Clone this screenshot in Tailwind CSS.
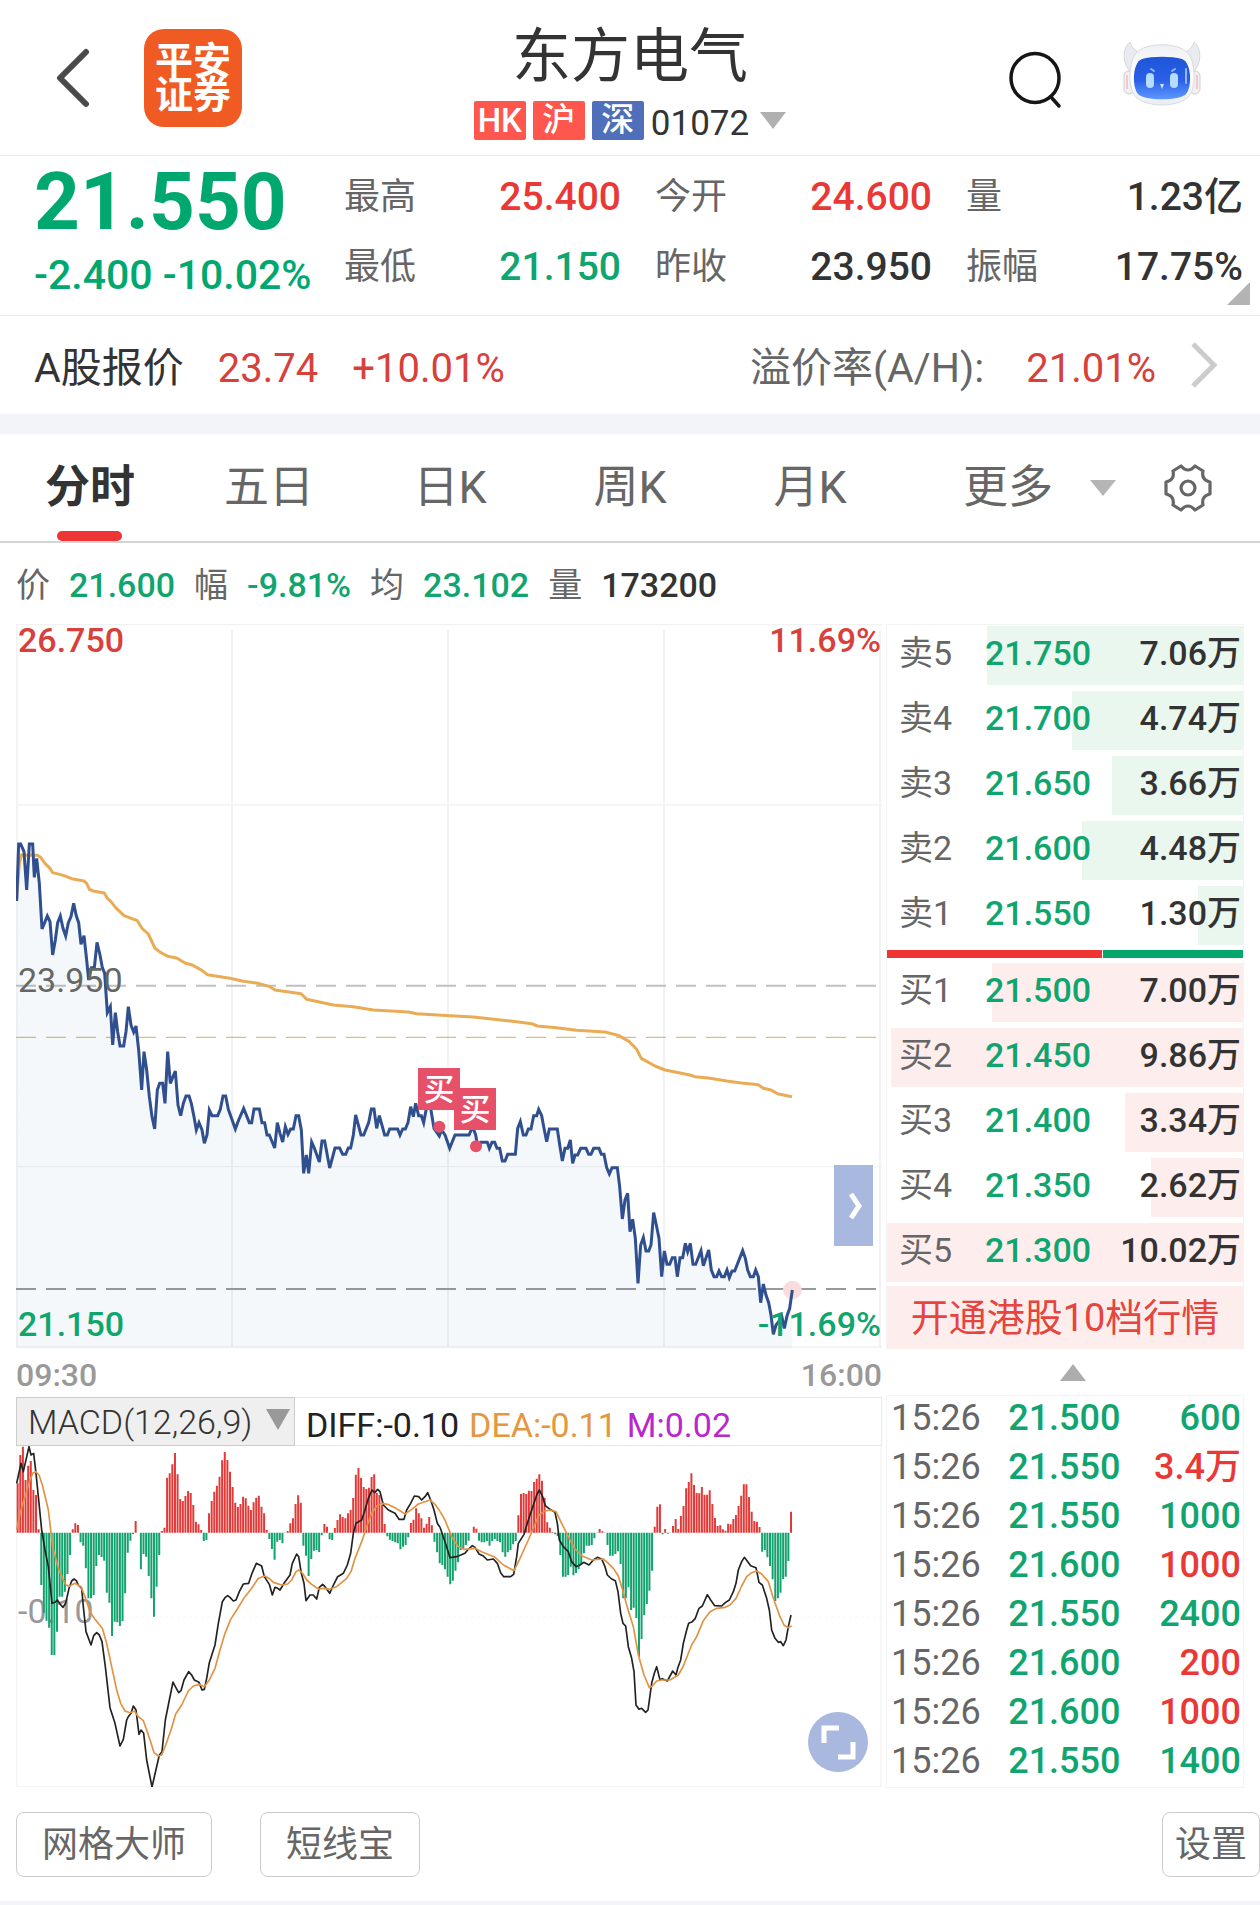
<!DOCTYPE html>
<html lang="zh-CN">
<head>
<meta charset="utf-8">
<meta name="viewport" content="width=device-width, initial-scale=1">
<title>东方电气 01072</title>
<script src="https://cdn.jsdelivr.net/npm/@tailwindcss/browser@4"></script>
</head>
<body class="bg-white text-[#333] font-['Roboto','Noto_Sans_CJK_SC',sans-serif]">

<header class="grid grid-cols-[1fr_auto_1fr] items-center h-[156px] border-b border-[#ececec]">
  <div class="flex items-center pl-[54px] gap-[52px]">
    <button aria-label="返回"><svg class="block w-[38px] h-[60px]" viewBox="0 0 38 60" fill="none" stroke="#4a4a4a" stroke-width="6" stroke-linecap="round" stroke-linejoin="round"><path d="M32 4 6 30l26 26"/></svg></button>
    <div class="w-[98px] h-[98px] rounded-[20px] bg-[#f05a23] text-white font-bold text-[38px] leading-[34px] text-center pt-[15px]">平安<br>证券</div>
  </div>
  <div class="flex flex-col items-center">
    <h1 class="text-[59px] leading-[72px] h-[86px] pt-1.5">东方电气</h1>
    <div class="flex items-center gap-[7px] h-[40px]">
      <span class="w-[52px] h-[39px] rounded-[2px] bg-[#ff564d] text-white text-[33px] leading-[40px] text-center font-medium">HK</span>
      <span class="w-[52px] h-[39px] rounded-[2px] bg-[#ff564d] text-white text-[33px] leading-[37px] text-center font-medium">沪</span>
      <span class="w-[52px] h-[39px] rounded-[2px] bg-[#4f6fba] text-white text-[33px] leading-[37px] text-center font-medium">深</span>
      <span class="text-[35px] leading-[40px] pt-1.5">01072</span>
      <svg class="w-[26px] h-[17px] ml-1" viewBox="0 0 26 17"><path d="M0 0h26L13 17z" fill="#b0b0b0"/></svg>
    </div>
  </div>
  <div class="flex items-center justify-end pr-[58px] gap-[60px]">
    <button aria-label="搜索" class="pt-1"><svg class="block w-[54px] h-[58px]" viewBox="0 0 54 58" fill="none" stroke="#161616" stroke-width="3.5" stroke-linecap="round"><ellipse cx="27" cy="27" rx="24" ry="24.5"/><path d="m43 46 8 9"/></svg></button>
    <button aria-label="智能助手"><svg class="block w-[80px] h-[66px] -mt-2" viewBox="0 0 80 66">
      <defs>
        <linearGradient id="face" x1="0" y1="0" x2="0" y2="1"><stop offset="0" stop-color="#1f55d8"/><stop offset=".55" stop-color="#2a5fe6"/><stop offset="1" stop-color="#5d98ff"/></linearGradient>
        <linearGradient id="shell" x1="0" y1="0" x2="0" y2="1"><stop offset="0" stop-color="#eef0f3"/><stop offset=".5" stop-color="#fff"/><stop offset="1" stop-color="#e9edf3"/></linearGradient>
      </defs>
      <path d="M8 1C3 5 0 14 4 24c2 5 5 7 8 8L18 12C12 9 9 5 8 1zM72 1c5 4 8 13 4 23-2 5-5 7-8 8l-6-20c6-3 9-7 10-11z" fill="#e9ebef" stroke="#d3d7dd"/>
      <rect x="2" y="30" width="10" height="23" rx="5" fill="#f3f0f1" stroke="#d9c9cb"/><rect x="68" y="30" width="10" height="23" rx="5" fill="#f3f0f1" stroke="#d9c9cb"/>
      <path d="M5 34v14M75 34v14" stroke="#dfa9a5"/>
      <path d="M14 12C24 1 56 1 66 12c7 8 8 31 3 40-7 16-51 16-58 0C6 43 7 20 14 12z" fill="url(#shell)" stroke="#d8dce2"/>
      <path d="M20 18c10-3 30-3 40 0 10 4 10 28 4 35-6 7-42 7-48 0-6-7-6-31 4-35z" fill="url(#face)"/>
      <rect x="24" y="32" width="8" height="15" rx="4" fill="#b5dcff"/><rect x="48" y="32" width="8" height="15" rx="4" fill="#b5dcff"/>
      <path d="m29 28 3 2M53 28l-3 2M64 28v14" stroke="#8fb8ff" stroke-width="2" stroke-linecap="round"/>
      <path d="M38 43h4l-2 5z" fill="#c4e4ff"/>
    </svg></button>
  </div>
</header>

<section class="relative flex h-[160px] border-b border-[#ececec] pl-[34px] pr-[17px]">
  <div class="w-[310px] shrink-0 text-[#00a870] whitespace-nowrap">
    <p class="text-[80px] font-bold leading-[92px]">21.550</p>
    <p class="text-[41px] leading-[54px] font-medium">-2.400 -10.02%</p>
  </div>
  <dl class="flex-1 grid grid-cols-3 gap-x-[34px] content-start pt-1.5 leading-[70px]">
    <div class="flex justify-between"><dt class="text-[36px] text-[#666]">最高</dt><dd class="text-[39px] font-medium text-[#e93835]">25.400</dd></div>
    <div class="flex justify-between"><dt class="text-[36px] text-[#666]">今开</dt><dd class="text-[39px] font-medium text-[#e93835]">24.600</dd></div>
    <div class="flex justify-between"><dt class="text-[36px] text-[#666]">量</dt><dd class="text-[39px] font-medium">1.23亿</dd></div>
    <div class="flex justify-between"><dt class="text-[36px] text-[#666]">最低</dt><dd class="text-[39px] font-medium text-[#10a56f]">21.150</dd></div>
    <div class="flex justify-between"><dt class="text-[36px] text-[#666]">昨收</dt><dd class="text-[39px] font-medium">23.950</dd></div>
    <div class="flex justify-between"><dt class="text-[36px] text-[#666]">振幅</dt><dd class="text-[39px] font-medium">17.75%</dd></div>
  </dl>
  <svg class="absolute right-[10px] bottom-[10px] w-[23px] h-[23px]" viewBox="0 0 23 23"><path d="M23 0v23H0z" fill="#b3b3b3"/></svg>
</section>

<a href="#a-share" class="flex items-center h-[98px] pl-[34px] pr-[42px] pt-2 text-[40px] whitespace-nowrap">
  <span class="text-[41px]">A股报价</span>
  <span class="ml-[34px] text-[#d8403c]">23.74</span>
  <span class="ml-[34px] text-[#d8403c]">+10.01%</span>
  <span class="ml-auto text-[41px] text-[#666]">溢价率(A/H):</span>
  <span class="ml-[42px] text-[#d8403c]">21.01%</span>
  <svg class="ml-[34px] w-[28px] h-[46px] -mt-2" viewBox="0 0 28 46" fill="none" stroke="#ccc" stroke-width="5"><path d="m3 2 21 21L3 44"/></svg>
</a>
<div class="h-5 bg-[#f3f4f9]"></div>

<nav class="flex items-stretch h-[109px] border-b-2 border-[#d5d5d5] text-[45px] leading-[106px] text-[#666] whitespace-nowrap">
  <button class="relative w-[180px] font-bold text-[#333]">分时<span class="absolute bottom-0 left-[57px] w-[65px] h-[10px] rounded-full bg-[#ee3535]"></span></button>
  <button class="w-[178px]">五日</button>
  <button class="w-[184px]">日K</button>
  <button class="w-[176px]">周K</button>
  <button class="w-[184px]">月K</button>
  <button class="flex items-center ml-auto gap-[37px]">更多<svg class="w-[26px] h-[16px]" viewBox="0 0 26 16"><path d="M0 0h26L13 16z" fill="#b5b5b5"/></svg></button>
  <button aria-label="图表设置" class="ml-[47px] mr-[47px]"><svg class="block w-[50px] h-[50px]" viewBox="-25 -25 50 50" fill="none" stroke="#666" stroke-width="3.200" stroke-linejoin="round"><path d="M-7-22Q0-14 7-22L15-17Q13-8 22-6V6Q13 8 15 17L7 22Q0 14-7 22L-15 17Q-13 8-22 6V-6Q-13-8-15-17Z"/><circle r="7"/></svg></button>
</nav>

<div class="flex items-center gap-[19px] h-[81px] pl-4 pt-1 text-[34px] font-medium text-[#10a56f] whitespace-nowrap">
  <span class="font-normal text-[#666]">价</span><span>21.600</span>
  <span class="font-normal text-[#666]">幅</span><span>-9.81%</span>
  <span class="font-normal text-[#666]">均</span><span>23.102</span>
  <span class="font-normal text-[#666]">量</span><span class="text-[#333]">173200</span>
</div>

<main class="grid grid-cols-[minmax(0,866fr)_minmax(0,358fr)] gap-1 px-4">
  <div>
    <div class="relative text-[34px] leading-[40px] font-medium">
      <svg class="block w-full h-auto" viewBox="0 0 2598 2172" fill="none">
        <g stroke="#f1f2f4" stroke-width="6">
          <path d="M0 2H2598M0 543H2598M0 1628H2598M0 2169H2598" stroke-width="4"/>
          <path d="M2 0V2172M648 18V2172M1296 18V2172M1944 18V2172M2592 18V2172"/>
        </g>
        <g stroke-dasharray="60 30" stroke-width="6">
          <path d="M0 1085H2580" stroke="#c0c0c0"/>
          <path d="M0 1240H2580" stroke="#e0bd74" stroke-width="4"/>
          <path d="M0 1995H2580" stroke="#999"/>
        </g>
        <circle cx="2329" cy="1998" r="28" fill="#fbdcdc"/>
        <g transform="translate(-48 588)" stroke-width="9" stroke-linejoin="round">
          <polygon id="area" fill="#3f6f9f" fill-opacity=".05"/>
          <polyline stroke="#e9ac55" points="50,235 58,130 64,105 112,106 122,112 135,130 150,145 158,158 190,166 215,176 252,183 260,190 268,208 280,213 313,219 322,235 333,245 347,263 372,287 412,302 426,325 445,342 465,385 480,396 503,409 530,414 555,429 577,435 607,452 622,464 690,475 730,484 775,490 810,500 825,510 903,521 920,538 1000,555 1060,560 1120,570 1225,576 1250,581 1350,587 1420,591 1495,599 1550,605 1595,611 1612,618 1670,623 1730,631 1815,636 1855,646 1888,665 1910,688 1924,715 1965,738 1995,750 2070,765 2085,770 2125,774 2180,783 2225,789 2275,794 2290,805 2313,810 2332,821 2376,830"/>
          <polyline id="price" stroke="#2f4f8f" stroke-linejoin="miter" points="50,243 56,72 62,72 72,95 80,210 88,72 98,72 103,172 110,115 118,190 126,327 134,308 142,288 150,305 158,405 166,360 173,308 181,288 189,325 197,348 205,308 213,290 221,250 229,288 236,308 243,373 252,347 260,420 266,480 274,443 283,443 291,367 300,405 307,443 314,460 322,578 331,560 338,675 346,578 353,635 360,678 371,678 378,635 385,560 393,615 401,636 408,618 416,690 425,810 432,695 440,750 448,830 456,890 464,927 472,810 479,790 488,790 495,850 503,695 511,790 519,770 526,753 534,855 542,887 550,850 558,828 567,828 574,850 582,890 589,930 597,908 606,930 613,970 621,945 628,870 636,887 653,887 661,868 669,828 677,828 685,868 693,890 706,927 716,900 731,865 748,908 755,908 762,867 778,867 786,908 794,908 801,945 808,945 824,984 832,908 840,940 848,966 856,920 864,943 872,927 880,927 888,887 896,887 904,930 911,1060 919,1005 926,1060 935,966 943,984 958,1026 966,963 974,963 989,1044 1005,984 1019,984 1028,1003 1037,1003 1045,984 1052,984 1060,945 1067,885 1083,945 1091,945 1106,908 1114,867 1122,867 1130,925 1138,887 1154,945 1162,945 1169,927 1193,927 1200,945 1208,927 1216,927 1224,908 1232,860 1240,890 1247,850 1256,887 1264,887 1271,908 1280,860 1292,865 1302,925 1318,948 1325,930 1335,945 1349,985 1365,945 1407,945 1418,920 1427,945 1435,990 1442,967 1462,967 1468,985 1476,967 1484,967 1491,985 1499,985 1507,1023 1515,1023 1523,1003 1546,1003 1553,925 1561,905 1570,945 1578,945 1585,927 1593,927 1601,887 1610,887 1616,868 1625,887 1632,925 1640,965 1648,927 1672,927 1680,980 1687,1023 1695,985 1703,985 1711,960 1718,1030 1725,1005 1733,1005 1742,985 1758,985 1766,1003 1773,1003 1781,985 1797,985 1804,1003 1812,1003 1820,1043 1828,1062 1836,1043 1852,1043 1859,1100 1867,1197 1875,1140 1883,1120 1890,1235 1898,1198 1906,1255 1914,1390 1922,1275 1930,1253 1938,1293 1946,1293 1953,1275 1961,1178 1969,1215 1977,1255 1985,1370 1993,1293 2001,1333 2009,1333 2017,1313 2025,1313 2032,1370 2040,1313 2048,1313 2056,1270 2063,1295 2071,1270 2079,1333 2087,1333 2103,1292 2110,1337 2126,1290 2134,1350 2142,1370 2150,1370 2157,1353 2165,1370 2173,1370 2181,1350 2188,1373 2196,1353 2204,1353 2228,1292 2236,1315 2243,1350 2251,1370 2260,1370 2267,1350 2275,1370 2282,1448 2290,1392 2298,1425 2306,1448 2313,1485 2320,1543 2328,1515 2336,1505 2345,1488 2353,1525 2361,1488 2369,1465 2377,1410"/>
        </g>
        <g fill="#e65068">
          <circle cx="1270" cy="1508" r="18"/><circle cx="1380" cy="1567" r="18"/>
          <path d="M1206 1332h126v126h-126zM1314 1392h126v126h-126z"/>
        </g>
        <g fill="#fff" font-size="92" font-weight="500" text-anchor="middle"><text x="1269" y="1429">买</text><text x="1377" y="1489">买</text></g>
      </svg>
      <span class="absolute left-0.5 -top-1 text-[#d8403c]">26.750</span>
      <span class="absolute right-px -top-1 text-[#d8403c]">11.69%</span>
      <span class="absolute left-0.5 top-[47%] -mt-1 text-[#666] font-normal">23.950</span>
      <span class="absolute left-0.5 bottom-1 text-[#10a56f]">21.150</span>
      <span class="absolute right-px bottom-1 text-[#10a56f]">-11.69%</span>
      <button aria-label="展开" class="absolute right-[9px] top-[75%] -mt-0.5 w-[39px] h-[81px] bg-[#a9b8df] flex items-center justify-center"><svg class="w-[14px] h-[26px] ml-1" viewBox="0 0 14 26" fill="none" stroke="#fff" stroke-width="5"><path d="m2 1 8 12-8 12"/></svg></button>
    </div>
    <div class="flex justify-between items-center h-[49px] pt-1 text-[32px] text-[#999] font-medium"><span>09:30</span><span>16:00</span></div>
    <div class="flex items-stretch h-[49px] border border-[#e9e9e9] text-[34px] leading-[54px] whitespace-nowrap">
      <button class="w-[279px] -m-px border border-[#ccc] bg-[#efefef] flex items-center justify-between pl-[11px] pr-1 font-light"><span>MACD(12,26,9)</span><svg class="w-[24px] h-[21px] -mt-1" viewBox="0 0 24 21"><path d="M0 0h24L12 21z" fill="#999"/></svg></button>
      <span class="ml-[12px] text-[#222]">DIFF:-0.10</span><span class="ml-[10px] text-[#e59740]">DEA:-0.11</span><span class="ml-[10px] text-[#b828cc]">M:0.02</span>
    </div>
    <div class="relative">
      <span class="absolute left-0.5 top-[43%] -mt-0.5 text-[34px] leading-[40px] text-[#999]">-0.10</span>
      <svg class="relative block w-full h-auto" viewBox="0 0 2598 1023" fill="none">
        <path d="M2 0V1021H2595V0" stroke="#f4f4f4" stroke-width="4"/>
        <path d="M0 513H2595" stroke="#eee" stroke-width="3" stroke-dasharray="3 15"/>
        <g stroke-width="6"><path id="up" stroke="#e23a38"/><path id="down" stroke="#12a26e"/></g>
        <g stroke-width="5" stroke-linejoin="round">
          <g transform="translate(-48 -288)">
            <polyline stroke="#222" points="50,400 63,340 70,365 87,290 93,315 101,310 108,370 115,440 125,540 135,600 145,650 152,720 156,760 165,757 172,750 180,762 189,772 197,760 207,715 215,693 222,687 229,692 235,705 245,715 250,770 258,845 273,885 281,857 290,848 298,855 306,875 316,950 330,1073 345,1120 360,1188 370,1168 380,1110 385,1100 393,1090 400,1068 408,1080 417,1153 423,1140 431,1150 440,1230 456,1311 478,1215 486,1205 496,1110 508,1050 519,996 526,1010 536,1028 543,1022 552,990 566,965 575,975 583,990 597,997 606,1020 613,1018 620,985 628,938 645,885 655,820 667,755 675,743 683,737 690,742 700,753 708,750 718,725 730,702 746,700 756,670 769,640 785,648 793,680 808,703 817,735 825,712 833,715 840,720 852,700 870,675 877,640 890,612 896,620 904,670 912,700 918,752 930,735 940,735 950,747 958,712 968,703 975,710 989,730 998,710 1013,680 1030,670 1042,645 1052,610 1060,550 1068,520 1085,510 1095,480 1105,445 1116,420 1124,428 1133,418 1140,425 1150,465 1165,480 1185,490 1197,508 1212,508 1220,480 1232,460 1243,438 1256,440 1265,450 1275,440 1283,428 1292,450 1302,480 1312,520 1320,532"/>
            <polyline stroke="#e19343" points="50,540 60,490 75,440 88,395 98,370 107,365 117,375 127,405 145,480 152,540 158,590 175,655 190,690 198,705 208,709 225,700 243,710 255,740 270,785 285,808 307,835 320,880 335,950 350,1020 362,1060 375,1083 390,1088 403,1083 415,1100 430,1112 440,1140 452,1175 462,1208 475,1218 485,1215 497,1185 513,1140 527,1092 545,1065 565,1023 580,1008 597,1003 613,1010 628,990 645,955 660,900 675,850 692,808 710,780 735,740 755,715 775,685 795,678 810,687 820,697 845,705 863,702 875,690 888,665 897,660 908,670 920,690 935,703 955,717 973,715 988,718 1010,710 1040,685 1053,665 1065,625 1085,575 1100,530 1115,490 1130,468 1145,460 1163,463 1185,473 1215,492 1235,478 1255,462 1290,450 1305,463 1320,484"/>
          </g>
          <g transform="translate(1272 -288)">
            <polyline stroke="#222" points="0,532 15,575 30,623 50,620 75,610 83,600 97,587 105,592 117,612 130,618 142,630 160,627 172,640 182,668 191,680 212,680 221,673 230,620 235,580 252,553 262,520 270,495 282,460 290,435 298,420 308,440 316,467 330,478 345,487 352,520 358,570 370,590 385,605 395,635 408,650 420,645 431,637 447,645 460,630 472,622 485,627 495,650 502,675 515,687 526,692 534,725 542,790 549,820 557,828 565,890 575,925 582,965 588,1065 597,1078 605,1075 617,1087 624,1080 635,1000 643,970 650,950 660,990 667,986 682,993 698,963 708,975 713,955 722,930 730,880 740,840 746,820 757,815 766,805 777,775 787,768 802,734 812,750 824,767 845,768 857,757 868,750 880,725 888,700 895,660 905,635 913,622 921,632 932,647 948,653 957,697 967,705 980,745 988,780 995,840 1005,865 1015,877 1022,875 1030,887 1038,870 1045,830 1053,795"/>
            <polyline stroke="#e19343" points="0,484 15,510 35,560 55,590 72,598 105,595 125,605 165,622 190,645 222,662 240,625 265,570 282,530 297,495 315,483 330,480 348,485 365,520 385,560 405,597 425,617 455,630 490,627 505,640 520,655 535,678 548,720 560,765 580,830 595,915 612,975 628,1013 637,1008 650,993 665,990 690,990 715,975 730,948 755,885 770,860 790,812 810,785 830,775 855,772 870,765 888,745 905,708 920,680 935,668 950,663 965,672 985,695 1000,745 1020,800 1032,825 1043,833 1055,828"/>
          </g>
        </g>
      </svg>
      <button aria-label="全屏" class="absolute right-[14px] bottom-[15px] w-[60px] h-[60px] rounded-full bg-[#a9b8df]"><svg class="block w-[60px] h-[60px]" viewBox="0 0 60 60" fill="none" stroke="#fff" stroke-width="5"><path d="M16 31V16h15M45 30v15H30"/></svg></button>
    </div>
  </div>

  <div>
    <div class="border-t border-x border-[#f4f4f4] pt-px text-[34px] font-medium whitespace-nowrap">
      <table class="w-full border-collapse" aria-label="卖盘"><tbody id="asks"></tbody></table>
      <div class="flex gap-px h-2 -mt-px"><span class="grow-[216] bg-[#f03434]"></span><span class="grow-[141] bg-[#06a76c]"></span></div>
      <table class="w-full border-collapse mt-[5px]" aria-label="买盘"><tbody id="bids"></tbody></table>
      <a href="#level10" class="block -mt-0.5 h-[63px] bg-[#fdeeed] text-center text-[38px] leading-[65px] font-normal text-[#e5443f]">开通港股10档行情</a>
    </div>
    <div class="flex justify-center items-center h-[46px] pl-4"><svg class="w-[26px] h-[17px]" viewBox="0 0 26 17"><path d="M0 17h26L13 0z" fill="#adadad"/></svg></div>
    <table class="w-full border-collapse border border-[#f4f4f4] text-[36px] leading-[42px] font-medium whitespace-nowrap" aria-label="成交明细"><tbody id="ticks"></tbody></table>
  </div>
</main>

<footer class="mt-6">
  <div class="flex pl-4 h-[65px] text-[36px] text-[#666] leading-[62px] whitespace-nowrap">
    <button class="w-[196px] border border-[#ccc] rounded-lg">网格大师</button>
    <button class="w-[160px] ml-[48px] border border-[#ccc] rounded-lg">短线宝</button>
    <button class="w-[98px] ml-auto border border-[#ccc] rounded-lg">设置</button>
  </div>
  <div class="mt-6 h-1 bg-[#f3f4f9]"></div>
</footer>

<script>
// Order book: label, price, volume, start of the depth bar in percent of the row
const asks = [['卖5','21.750','7.06万',28.2],['卖4','21.700','4.74万',52],['卖3','21.650','3.66万',63.1],['卖2','21.600','4.48万',54.7],['卖1','21.550','1.30万',87.2]];
const bids = [['买1','21.500','7.00万',29.6],['买2','21.450','9.86万',1.1],['买3','21.400','3.34万',66.8],['买4','21.350','2.62万',74],['买5','21.300','10.02万',0]];
const book = (rows, color) => rows.map(([l, p, v, s]) => `<tr class="h-[65px] bg-no-repeat bg-top bg-[length:100%_59px]" style="background-image:linear-gradient(90deg,transparent ${s}%,${color} ${s}%)"><th scope="row" class="w-[98px] pl-3 pb-2.5 text-left font-normal text-[#666]">${l}</th><td class="pb-2.5 text-left text-[#10a56f]">${p}</td><td class="pb-2.5 pr-0.5 text-right">${v}</td></tr>`).join('');
document.getElementById('asks').innerHTML = book(asks, '#eaf7ef');
document.getElementById('bids').innerHTML = book(bids, '#fdeeed');

// Trades: price, volume, direction
const ticks = [['21.500','600',0],['21.550','3.4万',1],['21.550','1000',0],['21.600','1000',1],['21.550','2400',0],['21.600','200',1],['21.600','1000',1],['21.550','1400',0]];
document.getElementById('ticks').innerHTML = ticks.map(([p, v, up]) => `<tr class="h-[49px]"><td class="pl-1 pb-1 font-normal text-[#666]">15:26</td><td class="pb-1 text-right text-[#10a56f]">${p}</td><td class="w-[123px] pb-1 pr-0.5 text-right ${up ? 'text-[#e93835]' : 'text-[#10a56f]'}">${v}</td></tr>`).join('');

// Shaded area below the price line
document.getElementById('area').setAttribute('points', document.getElementById('price').getAttribute('points') + ' 2377,1584 50,1584');

// MACD histogram: end of each bar, zero line at 548
const bars = [400,315,290,390,347,333,420,435,538,705,788,812,833,915,915,845,740,740,725,672,615,538,520,525,577,587,655,745,745,735,648,615,621,632,728,758,858,815,817,828,813,730,608,572,552,513,548,658,612,620,678,745,800,710,615,543,533,383,370,343,309,373,447,453,438,423,429,465,515,523,540,573,570,490,453,425,407,380,331,306,330,365,411,458,471,462,440,445,467,480,457,443,437,470,490,540,567,597,629,575,570,580,549,543,520,505,462,436,458,587,617,678,627,602,600,606,556,522,530,568,570,534,510,493,501,505,490,480,444,374,354,384,411,417,413,381,373,428,435,465,522,559,569,573,577,580,598,590,585,562,519,509,475,490,505,533,521,501,526,575,607,640,645,658,680,703,692,662,637,600,597,585,572,548,530,536,572,577,577,573,587,573,567,573,577,607,620,607,600,583,573,496,432,429,432,422,423,396,386,373,392,443,517,533,546,553,558,615,680,680,675,650,676,669,658,643,610,587,587,585,565,549,537,544,549,585,617,617,612,604,642,745,745,712,780,773,804,920,867,795,762,722,662,530,470,463,553,537,551,549,528,507,537,498,468,415,396,370,405,429,430,411,434,434,421,462,504,528,526,538,542,521,523,507,495,468,437,403,403,441,485,513,515,531,605,600,622,648,688,753,745,728,687,680,633,485];
let up = '', down = '';
bars.forEach((y, i) => {
  const x = (5 + i * 2320 / (bars.length - 1)).toFixed(1);
  const d = `M${x} 260V${y - 288}`;
  if (y < 548) up += d; else down += d;
});
document.getElementById('up').setAttribute('d', up);
document.getElementById('down').setAttribute('d', down);
</script>
</body>
</html>
